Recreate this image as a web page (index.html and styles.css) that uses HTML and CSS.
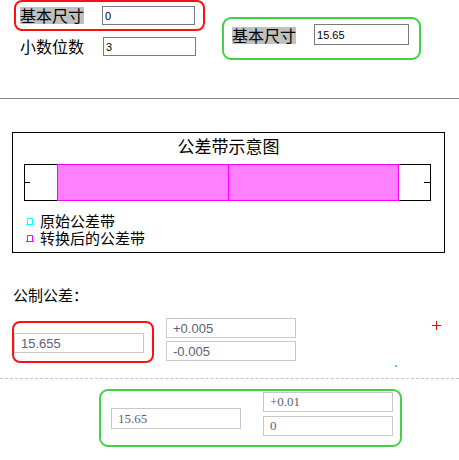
FILE: index.html
```html
<!DOCTYPE html>
<html lang="zh-CN">
<head>
    <meta charset="UTF-8">
    <meta name="viewport" content="width=device-width, initial-scale=1.0">
    <title>公差带转换</title>
    <link rel="stylesheet" href="styles.css">
</head>
<body>
    <div class="top">
        <div class="base">
            <div class="hl-red base-row">
                <span class="tag">基本尺寸</span>
                <input class="field" type="text" value="0">
            </div>
            <div class="digits-row">
                <span class="name">小数位数</span>
                <input class="field" type="text" value="3">
            </div>
        </div>
        <div class="hl-green result">
            <span class="tag">基本尺寸</span>
            <input class="field field-wide" type="text" value="15.65">
        </div>
    </div>

    <div class="divider"></div>

    <div class="diagram">
        <div class="diagram-title">公差带示意图</div>
        <svg class="bar" width="407" height="37" viewBox="0 0 407 37">
            <rect x="0.5" y="0.5" width="406" height="36" fill="#fff" stroke="#000"/>
            <rect x="33.5" y="0.5" width="341" height="36" fill="#ff80ff" stroke="#ff00ff"/>
            <line x1="204.5" y1="0" x2="204.5" y2="37" stroke="#ff00ff"/>
            <line x1="0" y1="18.5" x2="6" y2="18.5" stroke="#000"/>
            <line x1="400" y1="18.5" x2="407" y2="18.5" stroke="#000"/>
        </svg>
        <div class="legend">
            <div class="legend-item">
                <svg class="mark" width="8" height="7" viewBox="0 0 8 7"><path d="M1.5 0.5H6.5M1.5 0.5V6M6.5 0.5V6M0 6.5H8" stroke="#00ffff" fill="none"/></svg>
                <span class="legend-text">原始公差带</span>
            </div>
            <div class="legend-item">
                <svg class="mark" width="8" height="7" viewBox="0 0 8 7"><path d="M1.5 0.5H6.5M1.5 0.5V6M6.5 0.5V6M0 6.5H8" stroke="#ff00ff" fill="none"/></svg>
                <span class="legend-text">转换后的公差带</span>
            </div>
        </div>
    </div>

    <p class="caption">公制公差：</p>
    <div class="tol-row">
        <div class="hl-red nominal">
            <input class="box-input" type="text" value="15.655">
        </div>
        <div class="limits">
            <input class="box-input" type="text" value="+0.005">
            <input class="box-input" type="text" value="-0.005">
        </div>
        <svg class="cross" width="9" height="9" viewBox="0 0 9 9"><path d="M4.5 0V9M0 4.5H9" stroke="#ff0000"/></svg>
        <span class="dot"></span>
    </div>

    <div class="dashed"></div>

    <div class="hl-green converted">
        <input class="box-input conv-nominal" type="text" value="15.65">
        <div class="limits conv-limits">
            <input class="box-input conv-field" type="text" value="+0.01">
            <input class="box-input conv-field" type="text" value="0">
        </div>
    </div>
</body>
</html>
```

FILE: styles.css
```css
body{
    margin: 0;
    font-family: "Noto Sans CJK SC", "Liberation Sans", sans-serif;
    color: #000;
}
.top{
    display: flex;
    align-items: flex-start;
}
.base{
    margin-left: 14px;
    width: 191px;
}
.hl-red{
    border: 2px solid #ff1010;
    border-radius: 8px;
    box-sizing: border-box;
}
.hl-green{
    border: 2px solid #44d044;
    border-radius: 9px;
    box-sizing: border-box;
}
.base-row{
    height: 31px;
    display: flex;
    align-items: center;
    padding-left: 4px;
}
.tag{
    background-color: #c0c0c0;
    font-size: 16px;
    line-height: 17px;
    height: 17px;
    white-space: nowrap;
}
.name{
    font-size: 16px;
    line-height: 17px;
    white-space: nowrap;
}
.field{
    margin-left: 18px;
    width: 93px;
    height: 19px;
    box-sizing: border-box;
    border: 1px solid #7a7a7a;
    padding: 0 2px;
    font-family: "Liberation Sans", sans-serif;
    font-size: 11px;
    color: #000;
    outline: none;
}
.field-wide{
    width: 95px;
    height: 21px;
    padding: 0 2px;
}
.digits-row{
    display: flex;
    align-items: center;
    margin-top: 6px;
    padding-left: 6px;
    height: 19px;
}
.digits-row .field{
    margin-left: 19px;
}
.result{
    margin: 17px 0 0 17px;
    width: 199px;
    height: 43px;
    display: flex;
    align-items: flex-start;
    padding: 5px 0 0 8px;
}
.result .tag{
    margin-top: 3px;
}
.divider{
    margin-top: 38px;
    border-top: 1px solid #8a8a8a;
}
.diagram{
    margin: 33px 14px 0 12px;
    height: 121px;
    box-sizing: border-box;
    border: 1px solid #000;
}
.diagram-title{
    margin-top: 3px;
    text-align: center;
    font-size: 17px;
    line-height: 20px;
}
.bar{
    display: block;
    margin: 8px 0 0 11px;
}
.legend{
    margin-top: 12px;
    padding-left: 13px;
}
.legend-item{
    display: flex;
    align-items: center;
    height: 17px;
}
.legend-text{
    display: block;
    font-family: "Liberation Sans", "Noto Sans CJK SC", sans-serif;
    font-size: 15px;
    line-height: 17px;
    height: 17px;
}
.mark{
    display: block;
    margin-right: 6px;
}
.caption{
    margin: 34px 0 0 13px;
    font-size: 15px;
    line-height: 15px;
}
.tol-row{
    position: relative;
    display: flex;
    align-items: flex-start;
    margin-top: 16px;
    margin-left: 12px;
}
.nominal{
    margin-top: 3px;
    width: 142px;
    height: 42px;
}
.box-input{
    display: block;
    width: 130px;
    height: 20px;
    box-sizing: border-box;
    border: 1px solid #c8c8c8;
    padding: 0 0 0 6px;
    font-family: "Liberation Sans Narrow", "Liberation Sans", sans-serif;
    font-size: 13px;
    color: #5c6170;
    outline: none;
}
.nominal .box-input{
    margin-top: 10px;
}
.limits{
    display: flex;
    flex-direction: column;
    gap: 3px;
    margin-left: 12px;
}
.cross{
    display: block;
    margin: 3px 0 0 136px;
}
.dot{
    position: absolute;
    left: 383px;
    top: 47px;
    width: 2px;
    height: 2px;
    background-color: #66dd66;
}
.dashed{
    margin-top: 15px;
    border-top: 1px dashed #c4c4c4;
}
.converted{
    margin: 10px 0 0 99px;
    width: 303px;
    height: 58px;
    display: flex;
    align-items: flex-start;
    padding: 1px 0 0 10px;
}
.conv-nominal{
    margin-top: 16px;
    height: 21px;
    font-family: "Liberation Serif", serif;
}
.conv-limits{
    margin-left: 22px;
    gap: 4px;
}
.conv-field{
    height: 20px;
    font-family: "Liberation Serif", serif;
}
```
